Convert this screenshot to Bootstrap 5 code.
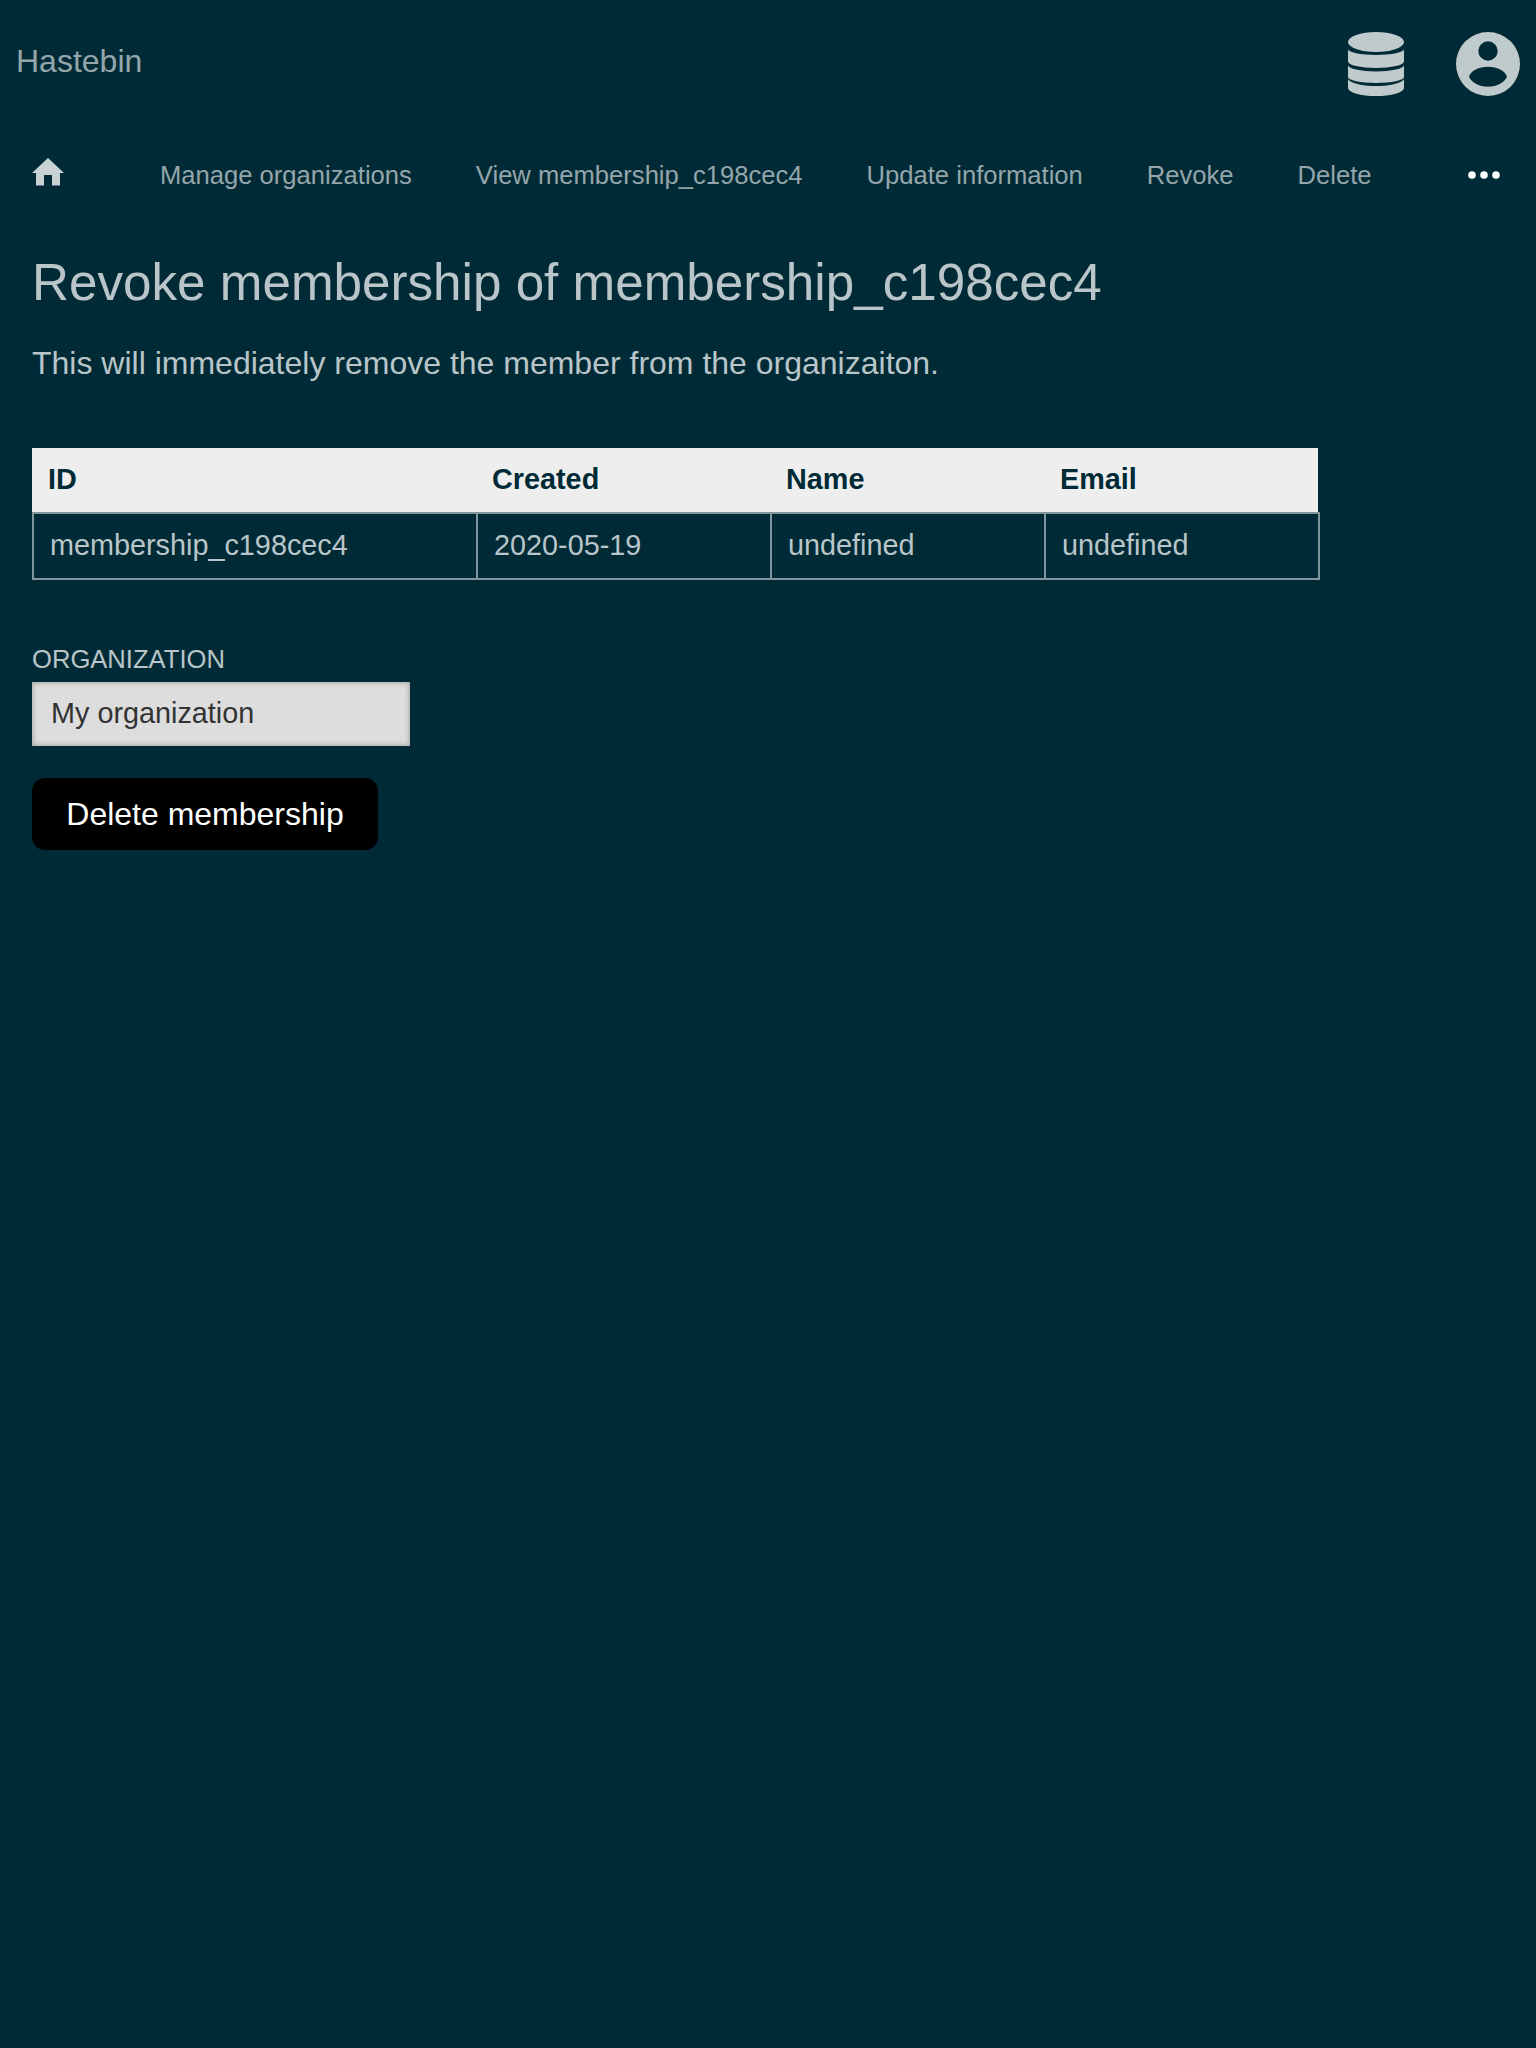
<!DOCTYPE html>
<html lang="en">
<head>
  <meta charset="UTF-8" />
  <meta name="viewport" content="width=device-width, initial-scale=1.0"/>
  <title>Hastebin</title>
  <link href="https://cdn.jsdelivr.net/npm/bootstrap@5.3.0/dist/css/bootstrap.min.css" rel="stylesheet"/>
  <style>
    body {
      background: #002b36;
      color: #b9c5c8;
      font-family: "Liberation Sans", Arial, sans-serif;
      min-height: 2048px;
    }
    a { text-decoration: none; }
    .top-bar { height: 128px; padding: 0 16px; }
    .brand-link { color: #94a6ab; font-size: 32px; line-height: 36px; margin-bottom: 6px; }
    .db-icon { width: 56px; height: 64px; margin-right: 52px; }
    .user-icon { width: 64px; height: 64px; }
    .sub-nav { height: 94px; padding: 0 36px 0 32px; }
    .home-link { margin-bottom: 6px; }
    .home-icon { width: 32px; height: 28px; margin-right: 96px; }
    .sub-nav .nav-link { color: #94a6ab; font-size: 25.6px; line-height: 30px; padding: 0; margin-right: 64px; }
    .dots-icon { width: 32px; height: 8px; margin-left: auto; }
    .page-body { padding: 31px 32px 0; }
    .page-title { font-size: 51.2px; line-height: 60px; font-weight: 400; color: #b9c5c8; margin: 0 0 30px; }
    .page-intro { font-size: 32px; line-height: 40px; margin: 0 0 65px; }
    .member-table { width: 1288px; margin: 0 0 64px; table-layout: fixed; border-collapse: separate; border-spacing: 0; --bs-table-bg: transparent; --bs-table-color: #b9c5c8; }
    .member-table th { background: #eee; color: #002b36; font-size: 28.8px; line-height: 32px; padding: 15px 16px 17px; border: 0; height: 64px; }
    .member-table th:last-child { border-right: 2px solid transparent; background-clip: padding-box; }
    .member-table tbody td { font-size: 28.8px; line-height: 32px; padding: 15px 16px 17px; border: solid rgba(255, 255, 255, .5); border-width: 2px 0 2px 2px; color: #b9c5c8; height: 68px; }
    .member-table tbody td:last-child { border-right-width: 2px; }
    .w-id { width: 444px; }
    .w-created { width: 294px; }
    .w-name { width: 274px; }
    .w-email { width: 276px; }
    .field-label { display: block; font-size: 25.6px; line-height: 30px; color: #b9c5c8; text-transform: uppercase; margin: 0 0 8px; }
    .org-select { display: block; appearance: none; width: 378px; height: 64px; padding: 0 19px; font-size: 28.8px; color: #333; background: #ddd; border: 0; border-radius: 0; box-shadow: inset 0 0 5px 1px #a8a8a8; }
    .delete-btn { display: block; margin-top: 32px; background: #000; color: #fff; font-size: 32px; line-height: 36px; height: 72px; width: 346px; padding: 0; border: 0; border-radius: 13px; }
    .delete-btn:hover { background: #000; color: #fff; }
  </style>
</head>
<body>
  <header class="top-bar d-flex align-items-center">
    <a class="brand-link me-auto" href="#">Hastebin</a>
    <svg class="db-icon" viewBox="0 0 56 64" fill="#bfcacd">
      <ellipse cx="28" cy="10" rx="28" ry="10"/>
      <path d="M0 17A28 6 0 0 0 56 17V29.500A28 6.500 0 0 1 0 29.500Z"/>
      <path d="M0 33A28 6.500 0 0 0 56 33V45A28 6 0 0 1 0 45Z"/>
      <path d="M0 46.500A28 7.500 0 0 0 56 46.500V56A28 8 0 0 1 0 56Z"/>
    </svg>
    <svg class="user-icon" viewBox="0 0 64 64" fill="#bfcacd">
      <path fill-rule="evenodd" d="M32 0A32 32 0 1 1 32 64A32 32 0 1 1 32 0ZM32 9.300A9.700 9.700 0 1 0 32 28.700A9.700 9.700 0 1 0 32 9.300ZM32 34.700C23 34.700 15 38.500 13 44.500C15 50.500 23 54.700 32 54.700C41 54.700 49 50.500 51 44.500C49 38.500 41 34.700 32 34.700Z"/>
    </svg>
  </header>
  <nav class="sub-nav nav flex-nowrap align-items-center">
    <a href="#" class="home-link d-flex">
      <svg class="home-icon" viewBox="0 0 32 28" fill="#c8d2d4">
        <path d="M16 0L32 15H28V27.500H20V17H12V27.500H4V15H0Z"/>
      </svg>
    </a>
    <a class="nav-link" href="#">Manage organizations</a>
    <a class="nav-link" href="#">View membership_c198cec4</a>
    <a class="nav-link" href="#">Update information</a>
    <a class="nav-link" href="#">Revoke</a>
    <a class="nav-link" href="#">Delete</a>
    <svg class="dots-icon" viewBox="0 0 32 8" fill="#fff">
      <circle cx="4" cy="4" r="3.800"/>
      <circle cx="16" cy="4" r="3.800"/>
      <circle cx="28" cy="4" r="3.800"/>
    </svg>
  </nav>
  <main class="page-body">
    <h1 class="page-title">Revoke membership of membership_c198cec4</h1>
    <p class="page-intro">This will immediately remove the member from the organizaiton.</p>
    <table class="table member-table">
      <thead>
        <tr>
          <th class="w-id">ID</th>
          <th class="w-created">Created</th>
          <th class="w-name">Name</th>
          <th class="w-email">Email</th>
        </tr>
      </thead>
      <tbody>
        <tr>
          <td>membership_c198cec4</td>
          <td>2020-05-19</td>
          <td>undefined</td>
          <td>undefined</td>
        </tr>
      </tbody>
    </table>
    <form>
      <label class="field-label" for="org">Organization</label>
      <select class="org-select" id="org">
        <option>My organization</option>
      </select>
      <button type="button" class="btn delete-btn">Delete membership</button>
    </form>
  </main>
</body>
</html>
